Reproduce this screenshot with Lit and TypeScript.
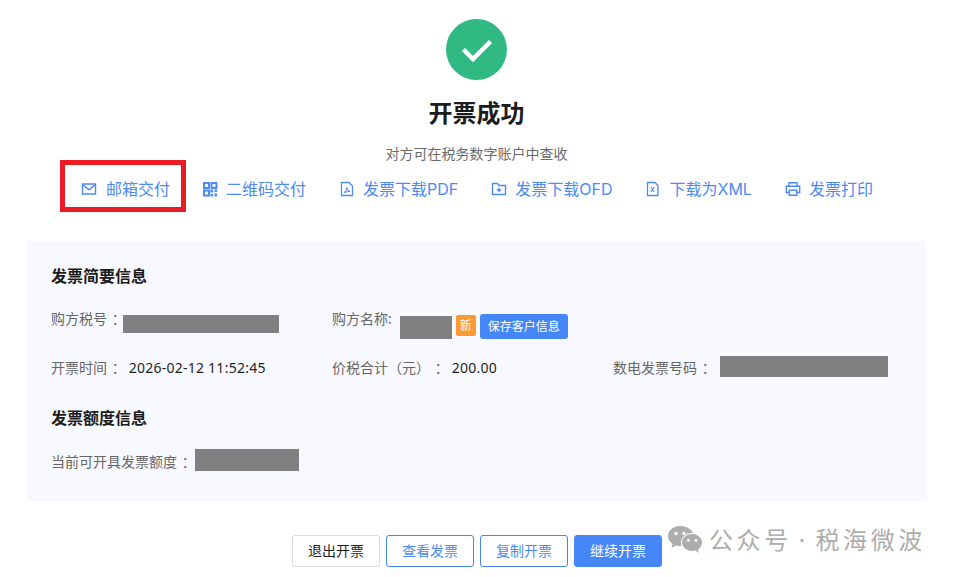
import { LitElement, html, css, svg } from "lit";
import { customElement } from "lit/decorators.js";

const icons: Record<string, any> = {
  mail: svg`<path d="M1.500 3h13v10h-13z" fill="none" stroke="currentColor" stroke-width="1.400"/><path d="M2 4l6 4.800L14 4" fill="none" stroke="currentColor" stroke-width="1.400"/>`,
  qr: svg`<path d="M2 2h5v5H2zM9.500 2h5v5h-5zM2 9.500h5v5H2z" fill="none" stroke="currentColor" stroke-width="2"/><path d="M8.500 8.500h2.500v3H8.500zM12.500 8.500h2.500v2.500h-2.500zM8.500 13h2.500v2.500H8.500zM12.500 12.500h2.500v3h-2.500z" fill="currentColor"/>`,
  pdf: svg`<path d="M2.500 1.500h7.500l3.500 3.500v9.500h-11z" fill="none" stroke="currentColor" stroke-width="1.300"/><path d="M5 11.500c1.500-1 2.500-3 2.800-5 .6 2 1.700 3.500 3.200 4-2 0-4 .2-6 1z" fill="none" stroke="currentColor" stroke-width="1"/>`,
  ofd: svg`<path d="M1.500 2.500h5l1.500 2h6.500v9h-13z" fill="none" stroke="currentColor" stroke-width="1.400"/><path d="M8 6.800v4.400M5.800 9h4.400" stroke="currentColor" stroke-width="1.400"/>`,
  xml: svg`<path d="M2.500 1.500h7.500l3 3v10H2.500z" fill="none" stroke="currentColor" stroke-width="1.300"/><path d="M5.800 6l3.400 5M9.200 6l-3.400 5" stroke="currentColor" stroke-width="1.100"/>`,
  print: svg`<path d="M4 5V1.800h8V5" fill="none" stroke="currentColor" stroke-width="1.400"/><path d="M4 11.500H1.300V5.300h13.400v6.200H12" fill="none" stroke="currentColor" stroke-width="1.400"/><path d="M4.200 9.300h7.600v5H4.200z" fill="none" stroke="currentColor" stroke-width="1.400"/>`,
};

const actions = [
  ["mail", "邮箱交付", "first"],
  ["qr", "二维码交付", ""],
  ["pdf", "发票下载PDF", ""],
  ["ofd", "发票下载OFD", ""],
  ["xml", "下载为XML", ""],
  ["print", "发票打印", ""],
];

@customElement("app-root")
export class AppRoot extends LitElement {
  static styles = css`
    :host {
      display: block;
      position: relative;
      width: 953px;
      height: 577px;
      overflow: hidden;
      background: #fff;
      font-family: "Noto Sans", "Noto Sans CJK SC", sans-serif;
      color: #1f1f1f;
    }
    .head { display: flex; flex-direction: column; align-items: center; padding-top: 19px; }
    .check { width: 61px; height: 61px; display: block; }
    h1 { margin: 15px 0 0; font-size: 24px; line-height: 36px; font-weight: 700; color: #1c1c1c; }
    .sub { margin-top: 13px; font-size: 14px; line-height: 20px; color: #6b6b6b; }
    .actions { display: flex; gap: 33px; padding: 13px 0 0 83px; align-items: center; height: 24px; }
    .act { display: flex; align-items: center; gap: 8px; color: #4d8af5; font-family: Inter, "Noto Sans CJK SC", sans-serif; font-size: 16px; line-height: 24px; white-space: nowrap; }
    .act svg { width: 16px; height: 16px; flex: none; }
    .act.first { gap: 9px; margin-left: -2px; margin-right: -1px; }
    .panel { margin: 40px 26px 0 27px; height: 260px; box-sizing: border-box; padding: 24px 24px 0; background: #f8f9fe; }
    h2 { margin: 0; font-size: 16px; line-height: 22px; font-weight: 700; color: #1c1c1c; }
    .grid { display: grid; grid-template-columns: 281px 281px 1fr; margin-top: 22px; row-gap: 25px; }
    .cell { display: flex; align-items: flex-start; height: 24px; font-size: 14px; line-height: 20px; color: #666; white-space: pre; word-spacing: 1px; }
    .val { color: #1f1f1f; letter-spacing: 0.25px; word-spacing: 0; }
    .v1 { margin-left: 3px; }
    .mask { background: #808080; flex: none; }
    .m1 { width: 156px; height: 18px; margin: 6px 0 0 -3px; }
    .m2 { width: 52px; height: 23px; margin: 7px 4px 0 8px; }
    .m3 { width: 168px; height: 21px; margin: -2px 0 0 4px; }
    .m4 { width: 104px; height: 22px; margin: -3px 0 0 -1px; }
    .new { width: 20px; height: 21px; margin-top: 6px; border-radius: 2px; background: #fb9a33; color: #fff; font-size: 12px; line-height: 21px; text-align: center; }
    .save { width: 88px; height: 25px; margin: 5px 0 0 4px; border-radius: 3px; background: #4587f7; color: #fff; font-size: 12px; line-height: 25px; text-align: center; }
    .h2b { margin-top: 25px; }
    .row { margin-top: 23px; }
    .btns { display: flex; gap: 6px; margin: 34px 0 0 292px; }
    .btn { width: 88px; height: 32px; box-sizing: border-box; border: 1px solid #4587f7; border-radius: 3px; background: #fff; color: #4d8af5; font-size: 14px; line-height: 30px; text-align: center; }
    .btn.plain { border-color: #dcdcdc; color: #1f1f1f; }
    .btn.solid { background: #4587f7; color: #fff; }
    .redbox { position: absolute; left: 60px; top: 160px; width: 126px; height: 52px; box-sizing: border-box; border: 5px solid #ed1c24; }
    .wm { position: absolute; left: 667px; top: 520px; display: flex; align-items: center; gap: 7px; color: #adadad; font-size: 24px; line-height: 36px; letter-spacing: 3.600px; word-spacing: -3px; white-space: pre; }
    .wm span { margin-top: 2px; }
    .wm svg { width: 35px; height: 29px; flex: none; }
  `;

  render() {
    return html`
      <div class="head">
        <svg class="check" viewBox="0 0 61 61">
          <circle cx="30.500" cy="30.500" r="30.500" fill="#31b984"/>
          <path d="M17.500 30.500L27 40l17.500-17.500" fill="none" stroke="#fff" stroke-width="4.500"/>
        </svg>
        <h1>开票成功</h1>
        <div class="sub">对方可在税务数字账户中查收</div>
      </div>
      <div class="actions">
        ${actions.map(([i, t, c]) => html`<div class="act ${c}"><svg viewBox="0 0 16 16">${icons[i]}</svg><span>${t}</span></div>`)}
      </div>
      <div class="panel">
        <h2>发票简要信息</h2>
        <div class="grid">
          <div class="cell"><span>购方税号 ：</span><div class="mask m1"></div></div>
          <div class="cell"><span>购方名称:</span><div class="mask m2"></div><div class="new">新</div><div class="save">保存客户信息</div></div>
          <div class="cell"></div>
          <div class="cell"><span>开票时间 ：</span><span class="val v1">2026-02-12 11:52:45</span></div>
          <div class="cell"><span>价税合计（元） ：</span><span class="val v1">200.00</span></div>
          <div class="cell"><span>数电发票号码 ：</span><div class="mask m3"></div></div>
        </div>
        <h2 class="h2b">发票额度信息</h2>
        <div class="cell row"><span>当前可开具发票额度 ：</span><div class="mask m4"></div></div>
      </div>
      <div class="btns">
        <div class="btn plain">退出开票</div>
        <div class="btn">查看发票</div>
        <div class="btn">复制开票</div>
        <div class="btn solid">继续开票</div>
      </div>
      <div class="redbox"></div>
      <div class="wm">
        <svg viewBox="0 2 35 27">
          <path d="M13 2C6.400 2 1 6.400 1 12c0 3.200 1.800 6 4.500 7.900L4.500 24l4.600-2.500c1.300.4 2.600.6 3.900.6.500 0 .9 0 1.400-.1-.3-1-.5-2-.5-3 0-5.500 5-9.900 11.300-9.900h.9C24.200 4.800 19 2 13 2z" fill="currentColor"/>
          <path d="M25 10c-5.500 0-10 3.800-10 8.500S19.500 27 25 27c1.100 0 2.200-.2 3.200-.5L32 29l-1-3.500c2.400-1.600 4-4.100 4-7 0-4.700-4.500-8.500-10-8.500z" fill="currentColor"/>
          <circle cx="9" cy="9.500" r="1.700" fill="#fff"/><circle cx="17" cy="9.500" r="1.700" fill="#fff"/>
          <circle cx="21.500" cy="16.500" r="1.400" fill="#fff"/><circle cx="29" cy="16.500" r="1.400" fill="#fff"/>
        </svg>
        <span>公众号 · 税海微波</span>
      </div>
    `;
  }
}
